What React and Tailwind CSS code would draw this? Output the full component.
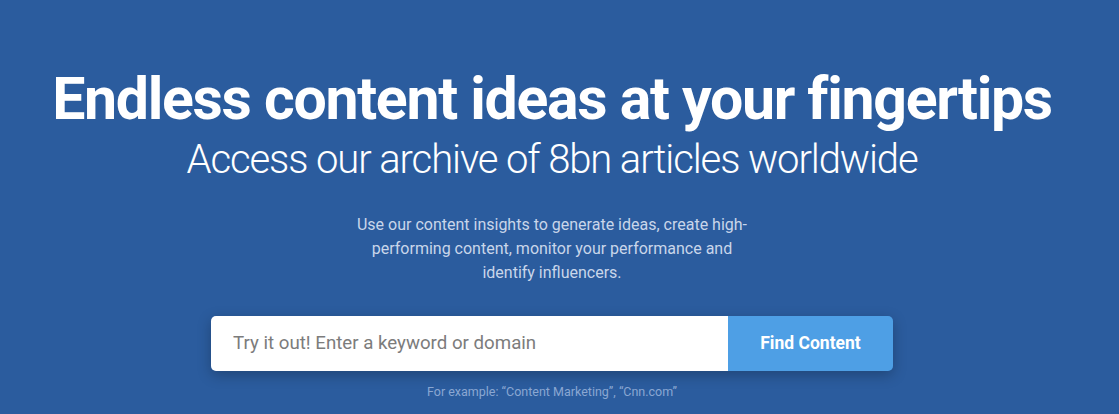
import React from "react";

const App = () => {
  return (
    <div
      className="w-full h-[414px] overflow-hidden bg-[#2b5c9e] pr-[15px] flex flex-col items-center"
      style={{ fontFamily: "Roboto, 'Liberation Sans', sans-serif" }}
    >
      <h1 className="mt-[66px] text-[59px] leading-[66px] font-bold text-white tracking-[-1.3px] whitespace-nowrap">
        Endless content ideas at your fingertips
      </h1>
      <h2 className="mt-[5px] text-[40px] leading-[46px] font-light text-white tracking-[-1.1px] whitespace-nowrap">
        Access our archive of 8bn articles worldwide
      </h2>

      <p className="mt-[30px] w-[396px] text-center text-[16px] leading-[24px] text-[#c9d6ea]">
        Use our content insights to generate ideas, create high-performing
        content, monitor your performance and identify influencers.
      </p>

      <form className="mt-[31px] flex w-[682px] h-[55px] rounded-[5px] overflow-hidden shadow-[0_4px_14px_rgba(0,0,0,0.25)]">
        <input
          type="text"
          placeholder="Try it out! Enter a keyword or domain"
          className="flex-1 bg-white px-[22px] text-[18.7px] text-gray-700 placeholder:text-[#7c7c7c] outline-none"
        />
        <button
          type="button"
          className="w-[165px] bg-[#4e9fe5] text-white text-[17.5px] font-bold"
        >
          Find Content
        </button>
      </form>

      <p className="mt-[12px] text-[12.5px] text-[#8aa7d2]">
        For example: “Content Marketing”, “Cnn.com”
      </p>
    </div>
  );
};

export default App;
